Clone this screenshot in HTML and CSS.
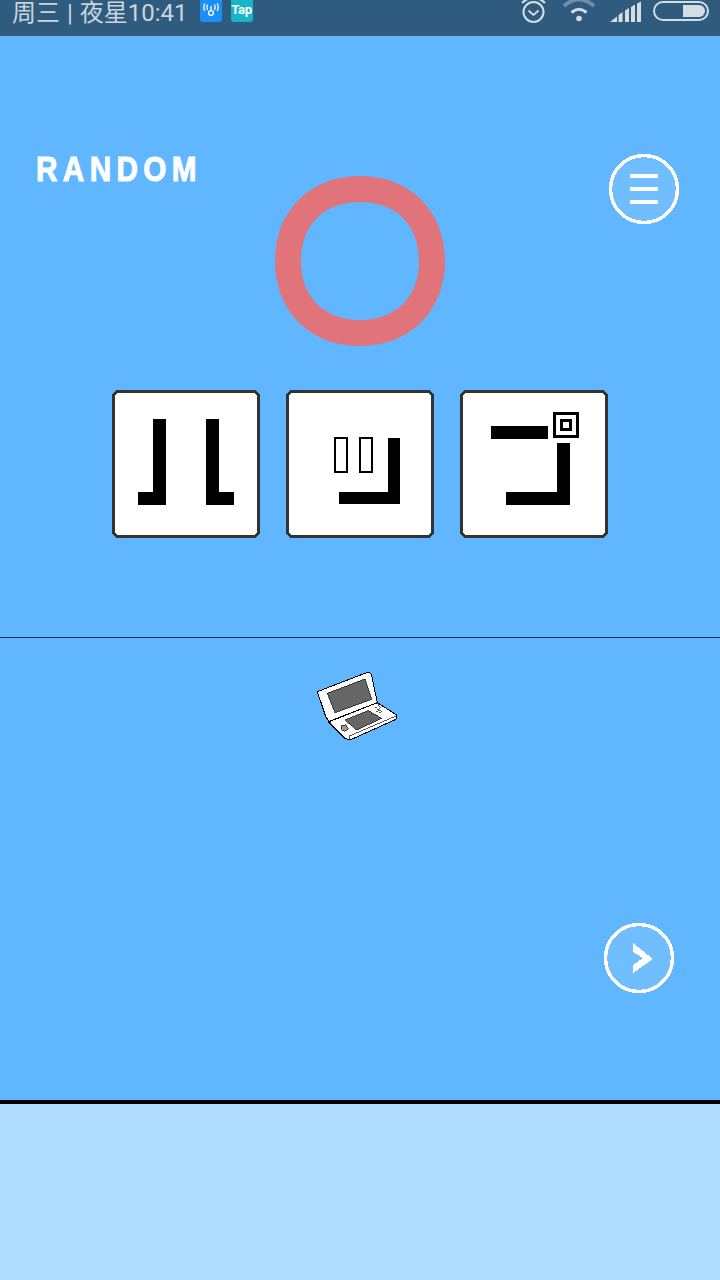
FILE: index.html
```html
<!DOCTYPE html>
<html lang="zh">
<head>
<meta charset="utf-8">
<title>RANDOM</title>
<link rel="stylesheet" href="styles.css">
</head>
<body>
<div class="screen">
  <header class="status">
    <div class="status-left">
      <span class="clock">周三 | 夜星10:41</span>
      <svg class="app-icon app-blue" viewBox="0 0 22 23" width="22" height="23">
        <path d="M0 0H22V20Q22 23 19 23H3Q0 23 0 20Z" fill="#1b8ff5"/>
        <g fill="none" stroke="#fff" stroke-width="1.3">
          <circle cx="11" cy="14" r="2.4"/>
          <path d="M11 7V11.500M7.500 5.500Q6 8 7.500 11M14.500 5.500Q16 8 14.500 11M4.800 4.500Q2.800 8 4.800 12M17.200 4.500Q19.200 8 17.200 12"/>
        </g>
      </svg>
      <span class="app-tap">Tap</span>
    </div>
    <div class="status-right">
      <svg viewBox="0 0 27 24" width="27" height="24" class="st-alarm">
        <g fill="none" stroke="#d5dde4" stroke-width="2">
          <circle cx="13.500" cy="12" r="10"/>
          <path d="M8.500 10.500L13.500 15L18.500 10.500" stroke-width="1.7"/>
          <path d="M2 3Q5 0 8 -1M25 3Q22 0 19 -1"/>
        </g>
      </svg>
      <svg viewBox="0 0 34 24" width="34" height="24" class="st-wifi">
        <g fill="none" stroke="#6f8ea8" stroke-width="4">
          <path d="M2 6Q17 -7 32 6"/>
        </g>
        <path d="M9.500 12.500Q17 6 24.500 12.500" fill="none" stroke="#d5dde4" stroke-width="3"/>
        <circle cx="17" cy="18.500" r="2.800" fill="#d5dde4"/>
      </svg>
      <svg viewBox="0 0 31 22" width="31" height="22" class="st-signal">
        <path d="M0 21L7 15.500V21ZM8.500 14L12.500 11V21H8.500ZM15 9.500L19 7V21H15ZM21 6L25 3.500V21H21ZM27 2.500L31 0.500V21H27Z" fill="#d5dde4"/>
      </svg>
      <div class="battery"><div class="battery-level"></div></div>
    </div>
  </header>

  <section class="play">
    <div class="play-head">
      <h1 class="title">RANDOM</h1>
      <svg class="ring" viewBox="0 0 170 170" width="170" height="170">
        <path fill-rule="evenodd" fill="#e0747a" d="M85 0C135 0 170 35 170 85C170 135 135 170 85 170C35 170 0 135 0 85C0 35 35 0 85 0ZM85 26C49 26 26 49 26 85C26 121 49 144 85 144C121 144 144 121 144 85C144 49 121 26 85 26Z"/>
      </svg>
      <button class="round-btn menu-btn" aria-label="menu">
        <svg viewBox="0 0 70 70" width="70" height="70" shape-rendering="crispEdges">
          <circle cx="35" cy="35" r="33.500" class="btn-ring"/>
          <rect x="21" y="20" width="28" height="4" fill="#fff"/>
          <rect x="21" y="33" width="28" height="4" fill="#fff"/>
          <rect x="21" y="46" width="28" height="4" fill="#fff"/>
        </svg>
      </button>
    </div>
    <div class="cards">
      <div class="card">
        <svg viewBox="-3 -3 148 148" width="148" height="148" shape-rendering="crispEdges">
          <polygon class="frame" points="2,-1.500 140,-1.500 143.500,2 143.500,140 140,143.500 2,143.500 -1.500,140 -1.500,2"/>
          <path d="M38 26H51V112H23V99H38Z"/>
          <path d="M91 26H104V99H119V112H91Z"/>
        </svg>
      </div>
      <div class="card">
        <svg viewBox="-3 -3 148 148" width="148" height="148" shape-rendering="crispEdges">
          <polygon class="frame" points="2,-1.500 140,-1.500 143.500,2 143.500,140 140,143.500 2,143.500 -1.500,140 -1.500,2"/>
          <path fill-rule="evenodd" d="M45 44H59V80H45ZM47 46V78H57V46Z"/>
          <path fill-rule="evenodd" d="M70 44H84V80H70ZM72 46V78H82V46Z"/>
          <path d="M99 45H111V111H50V99H99Z"/>
        </svg>
      </div>
      <div class="card">
        <svg viewBox="-3 -3 148 148" width="148" height="148" shape-rendering="crispEdges">
          <polygon class="frame" points="2,-1.500 140,-1.500 143.500,2 143.500,140 140,143.500 2,143.500 -1.500,140 -1.500,2"/>
          <rect x="28" y="33" width="57" height="13"/>
          <path fill-rule="evenodd" d="M90 19H116V45H90ZM93 22V42H113V22Z"/>
          <path fill-rule="evenodd" d="M97 26H109V38H97ZM100 29V35H106V29Z"/>
          <path d="M94 50H107V112H43V99H94Z"/>
        </svg>
      </div>
    </div>
  </section>

  <section class="stage">
    <svg class="device" viewBox="30 0 360 270" width="120" height="90" shape-rendering="crispEdges">
      <g stroke="#000" stroke-width="3" stroke-linejoin="round">
        <path fill="#fff" d="M82 95L235 36L244 42L262 128L118 184L108 172Z"/>
        <path fill="#fff" d="M115 186L262 128L320 165L318 178L180 240L165 235Z"/>
      </g>
      <path fill="#666" stroke="#000" stroke-width="2" d="M112 100L225 57L245 118L135 158Z"/>
      <path fill="#666" stroke="#000" stroke-width="2" d="M165 180L235 152L275 175L200 210Z"/>
      <path fill="#999" stroke="#000" stroke-width="2" d="M153 198L168 194L175 207L165 214L155 210Z"/>
      <path fill="none" stroke="#000" stroke-width="2" d="M255 145L262 140M262 150L273 143M258 156L272 150M266 160L276 154"/>
      <path fill="none" stroke="#000" stroke-width="2" d="M118 184L125 196M262 128L268 140M180 240L178 228L318 168"/>
    </svg>
    <button class="round-btn next-btn" aria-label="next">
      <svg viewBox="0 0 70 70" width="70" height="70" shape-rendering="crispEdges">
        <circle cx="35" cy="35" r="33.500" class="btn-ring"/>
        <path d="M29 20L49 36L29 50V42L39 35L29 29Z" fill="#fff"/>
      </svg>
    </button>
  </section>

  <footer class="ad"></footer>
</div>
</body>
</html>
```
FILE: styles.css
```css
* { box-sizing: border-box; }
html, body { margin: 0; padding: 0; }
body { background: #60b6ff; font-family: "Roboto", "Noto Sans CJK SC", sans-serif; }
.screen { width: 720px; height: 1280px; display: flex; flex-direction: column; overflow: hidden; }

.status { height: 36px; flex: none; background: #2f5c7e; display: flex; justify-content: space-between; align-items: flex-start; }
.status-left { display: flex; align-items: flex-start; padding-left: 12px; }
.clock { font-size: 24px; line-height: 26px; font-weight: 400; color: #c9d4dd; white-space: pre; word-spacing: 1px; }
.app-icon { display: block; flex: none; }
.app-blue { margin-left: 12px; margin-top: -1px; }
.app-tap { width: 22px; height: 22px; margin-left: 9px; background: #17b5c6; border-radius: 0 0 3px 3px; color: #fff; font-family: "Roboto", sans-serif; font-weight: 700; font-size: 13px; line-height: 20px; text-align: center; letter-spacing: -0.3px; }
.status-right { display: flex; align-items: flex-start; padding-right: 11px; }
.st-wifi { margin-left: 15px; }
.st-signal { margin-left: 14px; margin-top: 1px; }
.battery { width: 56px; height: 20px; margin-left: 12px; margin-top: 1px; border: 2px solid #d5dde4; border-radius: 10px; display: flex; justify-content: flex-end; padding: 2px; }
.battery-level { width: 22px; height: 12px; background: #d5dde4; border-radius: 0 6px 6px 0; }

.play { height: 602px; flex: none; border-bottom: 1px solid #0a2a4a; padding-top: 118px; }
.play-head { display: grid; grid-template-columns: 1fr auto 1fr; align-items: start; }
.title { margin: 0 0 0 36px; font-family: "Liberation Sans", sans-serif; font-size: 35px; line-height: 30px; font-weight: 700; color: #fff; letter-spacing: 6.3px; transform: scaleX(0.85); transform-origin: left center; white-space: nowrap; -webkit-text-stroke: 1px #fff; }
.ring { display: block; margin-top: 22px; }
.round-btn { padding: 0; margin: 0; border: 0; background: none; display: block; width: 70px; height: 70px; }
.round-btn svg { display: block; }
.btn-ring { fill: rgba(255, 255, 255, 0.1); stroke: #fff; stroke-width: 3.5; }
.menu-btn { justify-self: end; margin-right: 41px; }

.cards { display: flex; justify-content: center; gap: 26px; margin-top: 44px; }
.card { width: 148px; height: 148px; }
.card svg { display: block; fill: #000; }
.card .frame { fill: #fff; stroke: #333; stroke-width: 3; }

.stage { height: 462px; flex: none; display: flex; flex-direction: column; padding-top: 22px; }
.device { display: block; align-self: center; }
.next-btn { align-self: flex-end; margin-top: 173px; margin-right: 46px; }

.ad { flex: 1; background: #b0dcff; border-top: 4px solid #000; }
```
